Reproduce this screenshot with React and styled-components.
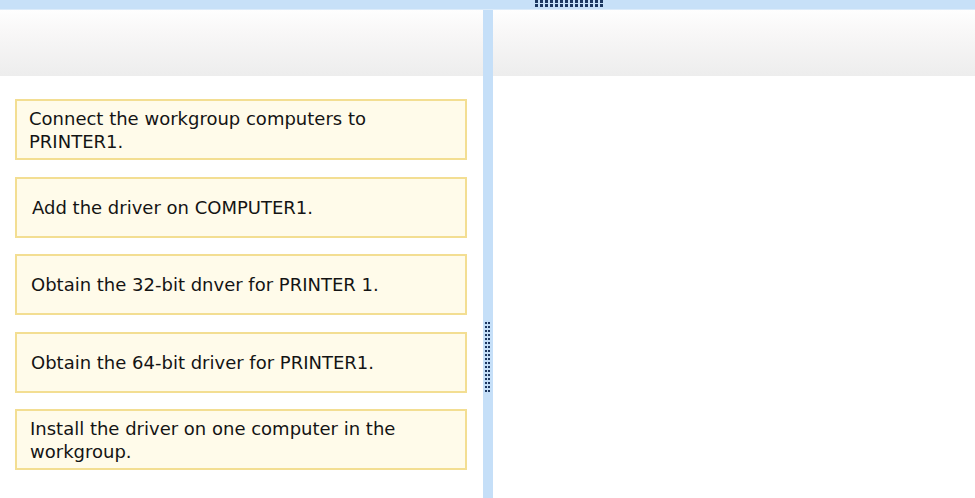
import styled, { createGlobalStyle } from 'styled-components';

const GlobalStyle = createGlobalStyle`
  html, body {
    margin: 0;
    padding: 0;
    background: #ffffff;
  }
  body {
    font-family: "DejaVu Sans", Verdana, sans-serif;
  }
`;

const Page = styled.div`
  width: 975px;
  height: 498px;
  overflow: hidden;
  display: flex;
  flex-direction: column;
  background: #ffffff;
`;

const TopBar = styled.div`
  height: 10px;
  flex: none;
  background: #c7e0f8;
  border-bottom: 1px solid #dcebfa;
  display: flex;
  padding-left: 535px;
  box-sizing: border-box;
`;

// square dots laid on a grid
const Grip = styled.div`
  width: ${({ $w }) => $w}px;
  height: ${({ $h }) => $h}px;
  background-image: conic-gradient(
    from 270deg at ${({ $dot }) => $dot}px ${({ $dot }) => $dot}px,
    #1d3760 25%,
    transparent 0
  );
  background-size: ${({ $px }) => $px}px 4px;
`;

const Body = styled.div`
  flex: 1;
  display: flex;
`;

const Panel = styled.div`
  width: ${({ $w }) => ($w ? `${$w}px` : 'auto')};
  flex: ${({ $w }) => ($w ? 'none' : '1')};
  display: flex;
  flex-direction: column;
`;

const Header = styled.div`
  height: 66px;
  flex: none;
  background: linear-gradient(#fefefe 0%, #f8f7f7 35%, #ededed 100%);
`;

const Divider = styled.div`
  width: 10px;
  flex: none;
  background: #c5dff8;
  display: flex;
  flex-direction: column;
  align-items: center;
  padding-top: 312px;
`;

const List = styled.div`
  display: flex;
  flex-direction: column;
  gap: 16.5px;
  padding: 23px 16px 0 15px;
`;

const Card = styled.div`
  height: 61px;
  box-sizing: border-box;
  border: 2px solid #f3de92;
  background: #fffbea;
  display: flex;
  align-items: center;
  padding: 0 30px 0 ${({ $pad }) => $pad || 12}px;
  font-size: 18px;
  line-height: 23px;
  color: #141414;
`;

const CardText = styled.div`
  max-width: 395px;
`;

const items = [
  { text: 'Connect the workgroup computers to PRINTER1.', pad: 12 },
  { text: 'Add the driver on COMPUTER1.', pad: 15 },
  { text: 'Obtain the 32-bit dnver for PRINTER 1.', pad: 14 },
  { text: 'Obtain the 64-bit driver for PRINTER1.', pad: 14 },
  { text: 'Install the driver on one computer in the workgroup.', pad: 13 },
];

export default function App() {
  return (
    <>
      <GlobalStyle />
      <Page>
        <TopBar>
          <Grip $w={70} $h={7} $px={5} $dot={3} />
        </TopBar>
        <Body>
          <Panel $w={483}>
            <Header />
            <List>
              {items.map((item) => (
                <Card key={item.text} $pad={item.pad}>
                  <CardText>{item.text}</CardText>
                </Card>
              ))}
            </List>
          </Panel>
          <Divider>
            <Grip $w={6} $h={72} $px={3} $dot={2} />
          </Divider>
          <Panel>
            <Header />
          </Panel>
        </Body>
      </Page>
    </>
  );
}
